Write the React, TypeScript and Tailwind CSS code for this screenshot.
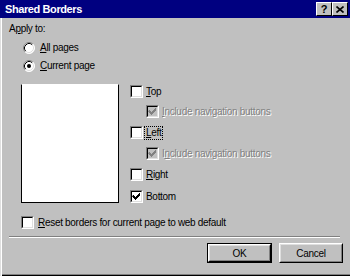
import type { ReactNode } from 'react';

function Check({ checked, disabled }: { checked?: boolean; disabled?: boolean }) {
    return (
        <div className="w-[13px] h-[13px] shrink-0 border border-t-[#808080] border-l-[#808080] border-b-white border-r-white">
            <div
                className={`w-full h-full border border-t-black border-l-black border-b-[#dfdfdf] border-r-[#dfdfdf] ${disabled ? 'bg-[#c0c0c0]' : 'bg-white'}`}
            >
                {checked && (
                    <svg width="9" height="9" viewBox="0 0 9 9" className="block">
                        <path
                            d="M1 3h1v1h1v1h1v-1h1v-1h1v-1h1v-1h1v3h-1v1h-1v1h-1v1h-1v1h-1v-1h-1v-1h-1v-1h-1z"
                            fill={disabled ? '#808080' : '#000'}
                        />
                    </svg>
                )}
            </div>
        </div>
    );
}

function Radio({ checked }: { checked?: boolean }) {
    return (
        <svg width="12" height="12" viewBox="0 0 12 12" className="shrink-0">
            <circle cx="6" cy="6" r="5.5" fill="#fff" />
            <path d="M2.11 9.89A5.5 5.5 0 0 1 9.89 2.11" fill="none" stroke="#808080" />
            <path d="M2.82 9.18A4.5 4.5 0 0 1 9.18 2.82" fill="none" stroke="#000" />
            <path d="M9.89 2.11A5.5 5.5 0 0 1 2.11 9.89" fill="none" stroke="#fff" />
            <path d="M9.18 2.82A4.5 4.5 0 0 1 2.82 9.18" fill="none" stroke="#dfdfdf" />
            {checked && <circle cx="6" cy="6" r="2" fill="#000" />}
        </svg>
    );
}

function U({ children }: { children: ReactNode }) {
    return <span className="underline underline-offset-[1px]">{children}</span>;
}

function Btn({ children, isDefault }: { children: ReactNode; isDefault?: boolean }) {
    return (
        <div className={`h-[20px] ${isDefault ? 'w-[65px] border border-black' : 'w-[64px]'}`}>
            <div className="w-full h-full border border-t-white border-l-white border-b-black border-r-black">
                <div className="w-full h-full flex items-center justify-center border border-t-[#dfdfdf] border-l-[#dfdfdf] border-b-[#808080] border-r-[#808080]">
                    {children}
                </div>
            </div>
        </div>
    );
}

export default function App() {
    const disabledText = 'text-[#808080] [text-shadow:1px_1px_0_#fff]';

    return (
        <div className="w-[350px] h-[276px] bg-[#c0c0c0] flex flex-col overflow-hidden font-['Liberation_Sans',Arial,sans-serif] text-[10px] tracking-[-0.3px] leading-[13px] text-black">
            {/* Title bar */}
            <div className="h-[18px] bg-[#000080] flex items-center pl-[5px] pr-[2px]">
                <span className="font-bold text-[11px] text-white tracking-[-0.4px]">Shared Borders</span>
                <div className="ml-auto flex">
                    {['?', 'x'].map(s => (
                        <div
                            key={s}
                            className="w-[16px] h-[14px] bg-[#c0c0c0] border border-t-white border-l-white border-b-black border-r-black flex items-center justify-center"
                        >
                            {s === '?' ? (
                                <span className="font-bold text-[11px] leading-none">?</span>
                            ) : (
                                <svg width="8" height="7" viewBox="0 0 8 7">
                                    <path d="M0.5 0.5L7.5 6.5M7.5 0.5L0.5 6.5" stroke="#000" strokeWidth="1.6" />
                                </svg>
                            )}
                        </div>
                    ))}
                </div>
            </div>

            {/* Body */}
            <div className="flex-1 flex flex-col [box-shadow:inset_1px_0_#dfdfdf,inset_2px_0_#fff,inset_0_-1px_#000,inset_0_-2px_#808080]">
                <div className="mt-[4px] ml-[9px] h-[13px]">
                    A<U>p</U>ply to:
                </div>

                <div className="mt-[6px] ml-[23px] h-[13px] flex items-center gap-[5px]">
                    <Radio />
                    <span>
                        <U>A</U>ll pages
                    </span>
                </div>
                <div className="mt-[5px] ml-[23px] h-[13px] flex items-center gap-[5px]">
                    <Radio checked />
                    <span>
                        <U>C</U>urrent page
                    </span>
                </div>

                {/* Preview + borders */}
                <div className="mt-[12px] ml-[21px] flex">
                    <div className="w-[98px] h-[119px] bg-white border border-black border-t-white" />
                    <div className="ml-[11px] flex flex-col">
                        <div className="mt-[1px] h-[13px] flex items-center">
                            <Check />
                            <span className="ml-[1px] px-[1px] border border-transparent">
                                <U>T</U>op
                            </span>
                        </div>
                        <div className="mt-[7px] ml-[16px] h-[13px] flex items-center">
                            <Check checked disabled />
                            <span className={`ml-[3px] ${disabledText}`}>
                                <U>I</U>nclude navigation buttons
                            </span>
                        </div>
                        <div className="mt-[8px] h-[13px] flex items-center">
                            <Check />
                            <span className="ml-[1px] px-[1px] border border-dotted border-black leading-[12px]">
                                <U>L</U>eft
                            </span>
                        </div>
                        <div className="mt-[8px] ml-[16px] h-[13px] flex items-center">
                            <Check checked disabled />
                            <span className={`ml-[3px] ${disabledText}`}>
                                I<U>n</U>clude navigation buttons
                            </span>
                        </div>
                        <div className="mt-[8px] h-[13px] flex items-center">
                            <Check />
                            <span className="ml-[1px] px-[1px] border border-transparent">
                                <U>R</U>ight
                            </span>
                        </div>
                        <div className="mt-[9px] h-[13px] flex items-center">
                            <Check checked />
                            <span className="ml-[1px] px-[1px] border border-transparent">Bottom</span>
                        </div>
                    </div>
                </div>

                <div className="mt-[13px] ml-[21px] h-[13px] flex items-center">
                    <Check />
                    <span className="ml-[4px]">
                        <U>R</U>eset borders for current page to web default
                    </span>
                </div>

                <div className="mt-[7px] ml-[9px] mr-[10px] border-t border-t-[#808080] border-b border-b-white" />

                <div className="mt-[5px] mr-[7px] flex justify-end gap-[7px]">
                    <Btn isDefault>OK</Btn>
                    <Btn>Cancel</Btn>
                </div>
            </div>
        </div>
    );
}
